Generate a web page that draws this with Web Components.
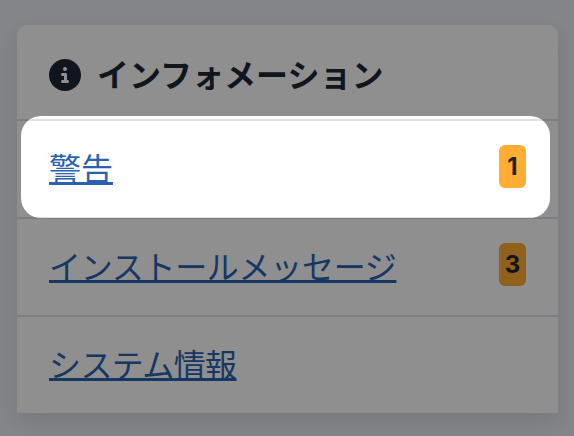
<!DOCTYPE html>
<html><head><meta charset="utf-8">
<style>
html,body{margin:0;height:100%}
body{background:#eaeef4;font-family:Inter,"Noto Sans CJK JP","Noto Sans",sans-serif;overflow:hidden}
</style></head><body>
<info-page>
<info-card>
<span slot="title">インフォメーション</span>
<info-row spot>警告<info-badge slot="end">1</info-badge></info-row>
<info-row style="--track:-.3px">インストールメッセージ<info-badge slot="end">3</info-badge></info-row>
<info-row style="--track:-.6px">システム情報</info-row>
</info-card>
</info-page>
<script>
function def(name,html,init){customElements.define(name,class extends HTMLElement{connectedCallback(){if(this.shadowRoot)return;const r=this.attachShadow({mode:'open'});r.innerHTML=html;init&&init(this,r);}});}
def('info-page',`<style>:host{display:block;box-sizing:border-box;height:436px;padding:25px 16px 23px 17px}</style><slot></slot>`);
def('info-card',`<style>
:host{display:block;background:#fff;border-radius:10px 10px 0 0;box-shadow:0 8px 24px rgba(0,0,0,.1)}
header{display:flex;align-items:center;gap:16px;height:94px;padding:1px 32px 0;box-sizing:border-box;font-size:32px;font-weight:700;color:#1b2836}
svg{width:32px;height:32px;flex:none;margin-top:5px}
</style>
<header><svg viewBox="0 0 512 512"><path fill="#1b2836" d="M256 0a256 256 0 1 0 0 512A256 256 0 1 0 256 0zM216 336h24v-64h-24c-13.300 0-24-10.700-24-24s10.700-24 24-24h48c13.300 0 24 10.700 24 24v88h8c13.300 0 24 10.700 24 24s-10.700 24-24 24h-80c-13.300 0-24-10.700-24-24s10.700-24 24-24zm40-208a32 32 0 1 1 0 64 32 32 0 1 1 0-64z"/></svg><slot name="title"></slot></header>
<slot></slot>`);
def('info-row',`<style>
:host{display:flex;align-items:flex-start;justify-content:space-between;box-sizing:border-box;height:98px;padding:24px 32px 0;border-top:2px solid #dee2e6;position:relative;font-size:32px;line-height:43px}
a{color:#2a62b0;text-decoration:underline;text-decoration-thickness:3px;text-underline-offset:1px;text-decoration-skip-ink:none;letter-spacing:var(--track,0);margin-top:3px}
.spot{position:absolute;left:4px;right:8px;top:-5px;bottom:-1px;border-radius:20px;box-shadow:0 0 0 1000px rgba(0,0,0,.44);pointer-events:none;z-index:2}
</style><a href="#"><slot></slot></a><slot name="end"></slot>`,(h,r)=>{if(h.hasAttribute('spot')){const d=document.createElement('div');d.className='spot';r.appendChild(d);h.style.zIndex=2}});
def('info-badge',`<style>:host{display:flex;align-items:center;justify-content:center;width:27px;height:43px;border-radius:6px;background:#ffad33;color:#212529;font:700 24px Inter,Roboto,sans-serif;letter-spacing:0}</style><slot></slot>`);
</script>
</body></html>
